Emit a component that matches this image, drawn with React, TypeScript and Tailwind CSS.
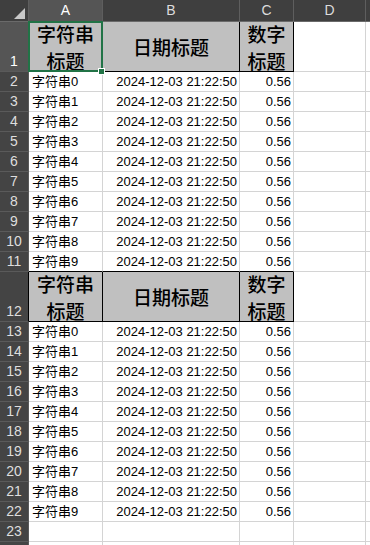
const SANS = "font-['Liberation_Sans','Noto_Sans_CJK_SC',sans-serif]";
const HEAD_FONT = "font-['Noto_Sans_CJK_SC',serif] font-medium";

type Row = { n: number; kind: "head" | "data" | "blank"; i?: number };

const rows: Row[] = [];
for (let b = 0; b < 2; b++) {
  rows.push({ n: b * 11 + 1, kind: "head" });
  for (let i = 0; i < 10; i++) rows.push({ n: b * 11 + 2 + i, kind: "data", i });
}
rows.push({ n: 23, kind: "blank" }, { n: 24, kind: "blank" });

function ColBar() {
  const cols = [
    { l: "A", w: "w-[74px]", sel: true },
    { l: "B", w: "w-[137px]" },
    { l: "C", w: "w-[54px]" },
    { l: "D", w: "w-[72px]" },
  ];
  return (
    <div className="flex h-[22px] bg-[#3f3f3f] border-b border-[#6a6a6a]">
      <div className="w-[29px] shrink-0 border-r border-[#5e5e5e] relative">
        <svg className="absolute left-[14px] top-[8px]" width="11" height="11" viewBox="0 0 11 11">
          <polygon points="11,0 11,11 0,11" fill="#c8c8c8" />
        </svg>
      </div>
      {cols.map((c) => (
        <div
          key={c.l}
          className={`${c.w} shrink-0 border-r border-[#5e5e5e] flex items-center justify-center text-[14px] ${
            c.sel ? "bg-[#555555] text-white" : "text-[#dcdcdc]"
          }`}
        >
          {c.l}
        </div>
      ))}
      <div className="flex-1" />
    </div>
  );
}

function HeadCells() {
  const hc = `bg-[#c0c0c0] border-r border-b border-black flex items-center justify-center text-center text-[19px] leading-[27px] text-black ${HEAD_FONT}`;
  return (
    <>
      <div className={`w-[74px] shrink-0 relative ${hc}`}>
        <span>字符串<br />标题</span>
      </div>
      <div className={`w-[137px] shrink-0 ${hc}`}>日期标题</div>
      <div className={`w-[54px] shrink-0 ${hc}`}>
        <span>数字<br />标题</span>
      </div>
    </>
  );
}

function SheetRow({ row, beforeHead }: { row: Row; beforeHead: boolean }) {
  const head = row.kind === "head";
  const sel = row.n === 1;
  const grid = "border-r border-b border-[#d4d4d4]";
  const bb = beforeHead ? "border-b-black" : "";
  // the last row is only a sliver at the window's bottom edge; its number is out of view
  const label = row.n === 24 ? "" : row.n;
  return (
    <div className={`flex ${head ? "h-[50px]" : "h-[20px]"}`}>
      <div
        className={`w-[29px] shrink-0 border-r border-b border-b-[#5a5a5a] flex items-end justify-center pb-[2px] text-[14px] leading-4 ${
          sel ? "bg-[#555555] text-white" : "bg-[#444444] text-[#dedede]"
        } ${head ? "border-r-black" : "border-r-[#5a5a5a]"}`}
      >
        {label}
      </div>
      {head ? (
        <HeadCells />
      ) : row.kind === "data" ? (
        <>
          <div className={`w-[74px] shrink-0 ${grid} ${bb} flex items-center px-[3px] text-[13px] text-black`}>
            字符串{row.i}
          </div>
          <div className={`w-[137px] shrink-0 ${grid} ${bb} flex items-center justify-end pr-[2px] text-[13px] text-black`}>
            2024-12-03 21:22:50
          </div>
          <div className={`w-[54px] shrink-0 ${grid} ${bb} flex items-center justify-end pr-[2px] text-[13px] text-black`}>
            0.56
          </div>
        </>
      ) : (
        <>
          <div className={`w-[74px] shrink-0 ${grid}`} />
          <div className={`w-[137px] shrink-0 ${grid}`} />
          <div className={`w-[54px] shrink-0 ${grid}`} />
        </>
      )}
      <div className={`w-[72px] shrink-0 ${grid}`} />
      <div className="flex-1 border-b border-[#d4d4d4]" />
    </div>
  );
}

export default function App() {
  return (
    <div className={`w-[370px] h-[545px] overflow-hidden bg-white relative ${SANS}`}>
      <ColBar />
      {rows.map((r, idx) => (
        <SheetRow key={r.n} row={r} beforeHead={rows[idx + 1]?.kind === "head"} />
      ))}
      {/* selection on A1 */}
      <div className="absolute left-[28px] top-[21px] w-[75px] h-[51px] border-2 border-[#217346] pointer-events-none" />
      <div className="absolute left-[98px] top-[68px] w-[7px] h-[7px] bg-[#217346] border border-white" />
    </div>
  );
}
